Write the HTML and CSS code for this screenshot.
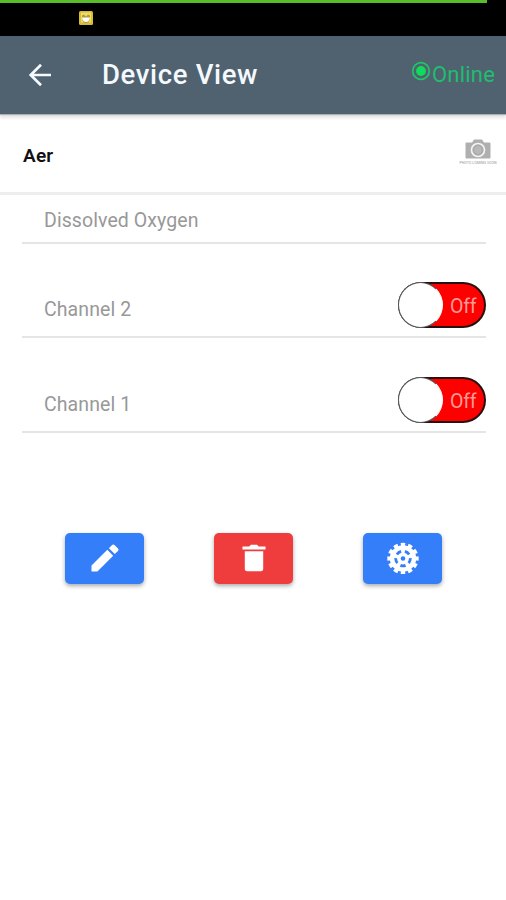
FILE: index.html
```html
<!DOCTYPE html>
<html lang="en">
<head>
<meta charset="utf-8">
<title>Device View</title>
<link rel="stylesheet" href="styles.css">
</head>
<body>
<div class="status">
  <div class="progress"></div>
  <svg class="notice" viewBox="0 0 14 14"><rect width="14" height="14" rx="1.5" fill="#d5bd36"/><rect x="2" y="1.5" width="10" height="10" fill="#f0dc67"/><path d="M3 4.500l2-1 2 2 2-2 2 1v4Q10 12 7 12T3 8.500z" fill="#b29b32"/><path d="M3 6.500h8Q10.500 11 7 11T3 6.500z" fill="#fff"/></svg>
</div>
<header class="bar">
  <svg class="back" viewBox="0 0 24 24"><path d="M23 12H2.500M13 1.700L2.700 12 13 22.300" fill="none" stroke="#f4fafc" stroke-width="2.700"/></svg>
  <h1>Device View</h1>
  <div class="online"><svg viewBox="0 0 20 20"><circle cx="10" cy="10" r="8.300" fill="none" stroke="#20c56b" stroke-width="1.700"/><circle cx="10" cy="10" r="4.900" fill="#0fdc5c"/></svg><span>Online</span></div>
</header>
<main>
  <section class="device">
    <h2>Aer</h2>
    <div class="photo">
      <svg viewBox="0 0 26 20"><path d="M1.500 3.500H7L9 .5h8l2 3h5.500q1 0 1 1v14q0 1-1 1h-23q-1 0-1-1v-14q0-1 1-1z" fill="#afafaf"/><circle cx="13" cy="11" r="6.500" fill="#aaa" stroke="#f4f4f4" stroke-width="1.700"/><circle cx="13" cy="11" r="3.800" fill="#b8b8b8"/></svg>
      <span>PHOTO COMING SOON</span>
    </div>
  </section>
  <section class="channels">
    <div class="row first"><span>Dissolved Oxygen</span></div>
    <div class="row"><span>Channel 2</span><div class="toggle"><i></i><b>Off</b></div></div>
    <div class="row"><span>Channel 1</span><div class="toggle"><i></i><b>Off</b></div></div>
  </section>
  <nav class="actions">
    <button aria-label="Edit"><svg viewBox="0 0 32 32"><path d="M2.500 23.600v5.900h5.900L24.200 13.700l-5.900-5.900zM29 8.900q1.200-1.200 0-2.400l-3.500-3.500q-1.200-1.200-2.400 0l-3.200 3.200 5.900 5.900z" fill="#fff"/></svg></button>
    <button class="delete" aria-label="Delete"><svg viewBox="0 0 32 32"><path d="M4.500 4.500h6.700L13 2.800h6l1.800 1.700h6.700v3h-23zM6.800 9.200h18.400v17.500q0 2.500-2.500 2.500H9.300q-2.500 0-2.500-2.500z" fill="#fff"/></svg></button>
    <button aria-label="Settings"><svg viewBox="-16 -16.5 32 32"><circle r="13.200" fill="#fff"/><circle r="13.800" fill="none" stroke="#fff" stroke-width="3.800" pathLength="120" stroke-dasharray="6 4" stroke-dashoffset="3"/><circle r="7.300" fill="none" stroke="#357efa" stroke-width="2.800" pathLength="100" stroke-dasharray="11.500 8.500" stroke-dashoffset="-19.250"/><circle r="2.300" fill="#357efa"/></svg></button>
  </nav>
</main>
</body>
</html>
```

FILE: styles.css
```css
* { box-sizing: border-box; }
body { margin: 0; min-height: 900px; background: #fff; font-family: Roboto, sans-serif; }
.status { height: 36px; background: #000; }
.progress { width: 487px; height: 3px; background: #57bd28; }
.notice { display: block; width: 14px; height: 14px; margin: 8px 0 0 79px; }
.bar { height: 78px; display: flex; align-items: center; padding: 0 11px 0 28px; background: #50616f; box-shadow: 0 1px 1px #aab0b4, 0 4px 3px #e6e6e6; }
.back { width: 24px; height: 24px; }
h1 { margin: 0 0 0 50px; font-size: 27.5px; line-height: 32px; font-weight: 500; color: #f3f9fc; letter-spacing: .65px; }
.online { display: flex; margin-left: auto; color: #20bd70; font-size: 22px; line-height: 28px; letter-spacing: .2px; }
.online svg { width: 20px; height: 20px; margin-right: 1px; }
.device { height: 81px; display: flex; align-items: center; justify-content: space-between; padding: 3px 8px 0 23px; border-bottom: 3px solid #eee; }
h2 { margin: 2px 0 0; font-size: 19px; font-weight: 600; color: #111; letter-spacing: .2px; }
.photo { width: 40px; display: flex; flex-direction: column; align-items: center; margin-top: -5px; }
.photo svg { width: 26px; height: 20px; }
.photo span { margin-top: 2px; font-size: 3.6px; line-height: 4px; color: #999; white-space: nowrap; }
.channels { margin: 0 20px 0 22px; }
.row { height: 94.5px; display: flex; align-items: flex-end; justify-content: space-between; padding: 0 0 8px 22px; border-bottom: 2px solid #e5e5e5; color: #989898; font-size: 19.5px; line-height: 23px; letter-spacing: .08px; }
.row > span { margin-bottom: 7px; }
.row.first { height: 48.5px; padding-bottom: 3px; }
.toggle { width: 88px; height: 46px; display: flex; align-items: center; border: 2px solid #271010; border-radius: 23px; background: #f00; }
.toggle i { width: 45px; height: 46px; margin-left: -2px; flex: none; border: 1px solid #555; border-right-color: #fff; border-radius: 50%; background: #fff; }
.toggle b { margin: 3px 0 0 7px; font-weight: 400; color: #ff9b96; letter-spacing: -.2px; }
.actions { display: flex; justify-content: space-between; margin: 100px 64px 0 65px; }
button { width: 79px; height: 51px; display: flex; align-items: center; justify-content: center; padding: 0; border: 0; border-radius: 5px; background: #357efa; box-shadow: 0 2px 4px #aaa; }
button svg { width: 32px; height: 32px; }
.delete { background: #ef3d3e; }
```
